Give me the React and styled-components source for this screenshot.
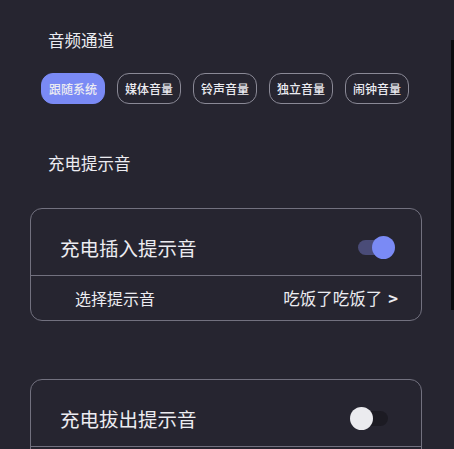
import React, { useState } from "react";
import styled, { createGlobalStyle } from "styled-components";

const GlobalStyle = createGlobalStyle`
    html, body {
        margin: 0;
        padding: 0;
        background-color: #262530;
        font-family: "Noto Sans CJK SC", "Noto Sans", sans-serif;
        color: #ececf1;
    }
`;

const Wrapper = styled.div`
    width: 454px;
    height: 449px;
    overflow: hidden;
    box-sizing: border-box;
    padding: 0 32px 0 30px;
    background-color: #262530;
    position: relative;
`;

const SectionTitle = styled.div`
    margin: ${(p) => p.$top}px 0 0 18px;
    font-size: 16.5px;
    line-height: 20px;
    height: 20px;
`;

const ChipRow = styled.div`
    display: flex;
    gap: 12px;
    margin: 23px 0 0 11px;
`;

const Chip = styled.div`
    width: 64px;
    height: 31px;
    box-sizing: border-box;
    border-radius: 12px;
    display: flex;
    align-items: center;
    justify-content: center;
    font-size: 12px;
    font-weight: 500;
    color: #ececf1;
    background-color: ${(p) => (p.$active ? "#7a8af5" : "transparent")};
    border: 1px solid ${(p) => (p.$active ? "#7a8af5" : "#8a8996")};
`;

const Card = styled.div`
    margin-top: ${(p) => p.$top}px;
    border: 1px solid #72717f;
    border-radius: 12px;
`;

const MainRow = styled.div`
    height: 66px;
    box-sizing: border-box;
    display: flex;
    align-items: center;
    justify-content: space-between;
    padding: 10px 26px 0 29px;
    font-size: 19.5px;
`;

const Divider = styled.div`
    height: 1px;
    background-color: #72717f;
`;

const SubRow = styled.div`
    height: 44px;
    display: flex;
    align-items: center;
    justify-content: space-between;
    padding: 0 23px 0 44px;
    font-size: 16px;
`;

const Value = styled.span`
    font-size: 16.5px;
`;

const Arrow = styled.span`
    margin-left: 6px;
    font-weight: 600;
`;

const Switch = styled.div`
    position: relative;
    width: 45px;
    height: 23px;
    cursor: pointer;
`;

const Track = styled.div`
    position: absolute;
    left: 8px;
    top: 4px;
    width: 30px;
    height: 15px;
    border-radius: 8px;
    background-color: ${(p) => (p.$on ? "#4a4c78" : "#1c1b23")};
`;

const Knob = styled.div`
    position: absolute;
    top: 0;
    left: ${(p) => (p.$on ? 22 : 0)}px;
    width: 23px;
    height: 23px;
    border-radius: 50%;
    background-color: ${(p) => (p.$on ? "#7a8af5" : "#ebebef")};
`;

const ScrollEdge = styled.div`
    position: absolute;
    right: 0;
    top: 40px;
    width: 3px;
    height: 270px;
    background-color: #0c0c0f;
`;

function Toggle({ on, onClick }) {
    return (
        <Switch onClick={onClick}>
            <Track $on={on} />
            <Knob $on={on} />
        </Switch>
    );
}

const channels = ["跟随系统", "媒体音量", "铃声音量", "独立音量", "闹钟音量"];

export default function App() {
    const [channel, setChannel] = useState(0);
    const [plugIn, setPlugIn] = useState(true);
    const [plugOut, setPlugOut] = useState(false);

    return (
        <>
            <GlobalStyle />
            <Wrapper>
                <SectionTitle $top={30}>音频通道</SectionTitle>
                <ChipRow>
                    {channels.map((c, i) => (
                        <Chip key={c} $active={i === channel} onClick={() => setChannel(i)}>
                            {c}
                        </Chip>
                    ))}
                </ChipRow>

                <SectionTitle $top={49}>充电提示音</SectionTitle>

                <Card $top={35}>
                    <MainRow>
                        <span>充电插入提示音</span>
                        <Toggle on={plugIn} onClick={() => setPlugIn(!plugIn)} />
                    </MainRow>
                    <Divider />
                    <SubRow>
                        <span>选择提示音</span>
                        <Value>
                            吃饭了吃饭了<Arrow>&gt;</Arrow>
                        </Value>
                    </SubRow>
                </Card>

                <Card $top={58}>
                    <MainRow>
                        <span>充电拔出提示音</span>
                        <Toggle on={plugOut} onClick={() => setPlugOut(!plugOut)} />
                    </MainRow>
                    <Divider />
                    <SubRow>
                        <span>选择提示音</span>
                        <Value>
                            吃饭了吃饭了<Arrow>&gt;</Arrow>
                        </Value>
                    </SubRow>
                </Card>
                <ScrollEdge />
            </Wrapper>
        </>
    );
}
